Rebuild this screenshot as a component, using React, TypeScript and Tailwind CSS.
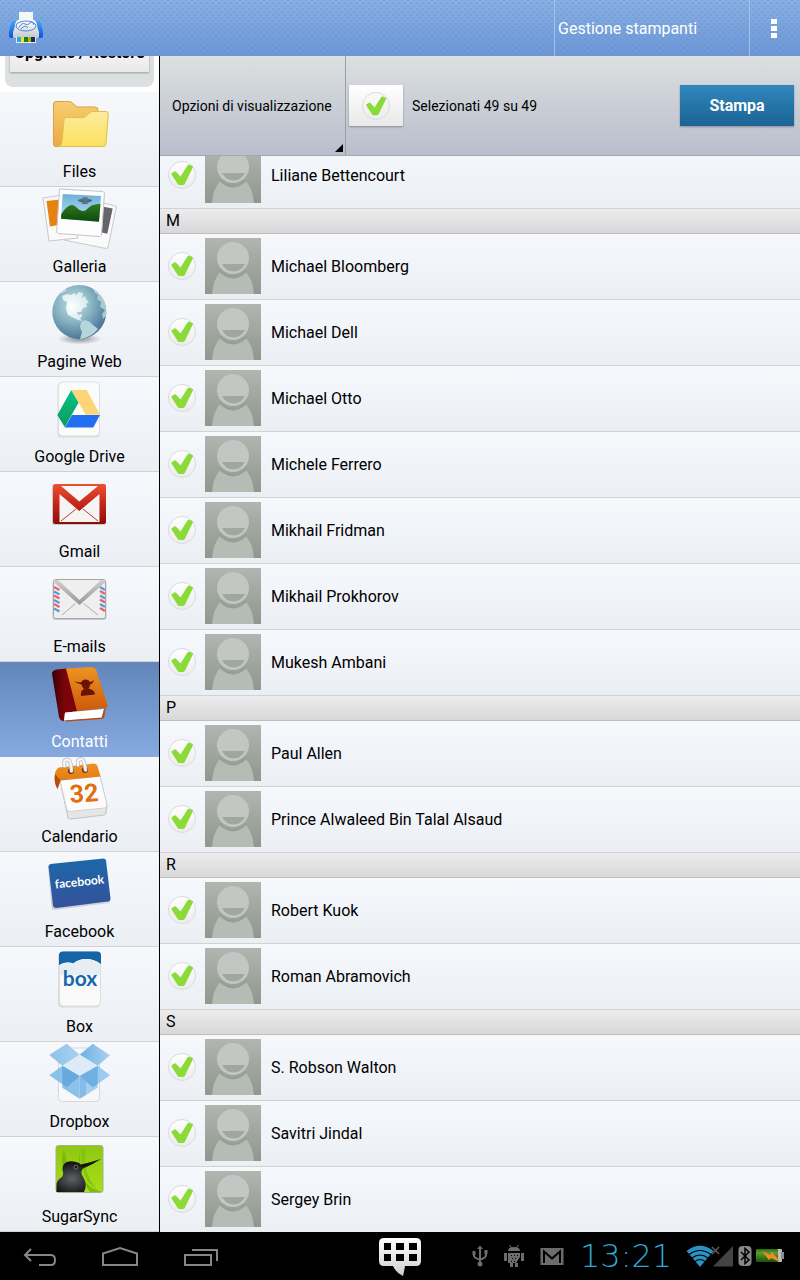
import { ReactNode, useState } from 'react';

interface Source {
    name: string;
    icon: ReactNode;
}

interface Group {
    letter?: string;
    people: string[];
}

/* ---------- sidebar icons, all on an 80x64 canvas ---------- */

const FilesIcon = () => (
    <>
        <defs>
            <linearGradient id="fBack" x1="0" y1="0" x2="0" y2="1">
                <stop offset="0" stopColor="#f6ce72" />
                <stop offset="1" stopColor="#eda944" />
            </linearGradient>
            <linearGradient id="fFront" x1="0" y1="0" x2="0" y2="1">
                <stop offset="0" stopColor="#fdeb9c" />
                <stop offset="1" stopColor="#fae25e" />
            </linearGradient>
        </defs>
        <path d="M13.500 12Q13.500 9.500 16 9.500H29Q31 9.500 32.500 11L37 15H55Q58 15 58 18V30L30 54.500H16Q13.500 54.500 13.500 52Z" fill="url(#fBack)" stroke="#dda13e" />
        <path d="M24 28Q24 25.500 26.500 25.500H42Q44 25.500 45.500 24.500L50 20.500Q51.500 19.500 53 19.500H66Q68.500 19.500 68.300 22L66 51.500Q65.800 54.500 63 54.500H18Q21.500 54 22 49Z" fill="url(#fFront)" stroke="#e2bf45" />
    </>
);

const GalleryIcon = () => (
    <>
        <defs>
            <linearGradient id="gSky" x1="0" y1="0" x2="0" y2="1">
                <stop offset="0" stopColor="#6cb0d8" />
                <stop offset="1" stopColor="#c4e4ee" />
            </linearGradient>
            <linearGradient id="gHill" x1="0" y1="0" x2="0" y2="1">
                <stop offset="0" stopColor="#2f7a22" />
                <stop offset="1" stopColor="#0d4a0c" />
            </linearGradient>
        </defs>
        <g strokeLinejoin="round">
            <path d="M64 16L76.500 19.500L68 60.500L66 61.500L24 53Z" fill="#fafafa" stroke="#c8cacc" />
            <path d="M62 19.500L72.700 21.500L67.300 46.700L60 45Z" fill="#66636a" />
            <path d="M3 11L22 8L38 51L9 54Z" fill="#fafafa" stroke="#c8cacc" />
            <path d="M6.500 14L20 12.500L18 38L10 39.500Z" fill="#e8820f" />
            <path d="M19.500 2L63 4.500L64.500 6L61.500 48L60 49.500L18 46.500L16.700 45Z" fill="#fdfdfd" stroke="#c4c6c8" />
        </g>
        <path d="M22.700 7L61 9L59 34.700L21 31.700Z" fill="url(#gSky)" />
        <path d="M21.300 27Q30 14 36 20T46 23Q52 16 60.500 17L59 34.700L21 31.700Z" fill="url(#gHill)" />
        <ellipse cx="45" cy="13.500" rx="7" ry="1.800" fill="#4c6375" />
        <ellipse cx="45" cy="12" rx="3" ry="2" fill="#5e7688" />
        <path d="M41 15.500H49L47 17H43Z" fill="#4c6375" />
    </>
);

const WebIcon = () => (
    <>
        <defs>
            <radialGradient id="wGlobe" cx=".4" cy=".35" r=".65">
                <stop offset="0" stopColor="#c3e1e1" />
                <stop offset=".5" stopColor="#8ab6c4" />
                <stop offset="1" stopColor="#4c779c" />
            </radialGradient>
            <radialGradient id="wLand" cx=".35" cy=".5" r=".8">
                <stop offset="0" stopColor="#ffffff" />
                <stop offset="1" stopColor="#c9e3e4" />
            </radialGradient>
            <radialGradient id="wShadow">
                <stop offset="0" stopColor="#8a8f95" />
                <stop offset="1" stopColor="#8a8f95" stopOpacity="0" />
            </radialGradient>
        </defs>
        <ellipse cx="39.500" cy="57" rx="22" ry="5.500" fill="url(#wShadow)" />
        <circle cx="39.300" cy="30" r="27" fill="url(#wGlobe)" />
        <path d="M22 14L27 12L31 13L34 11L36 13L39 10L43 11L42 16L45 14L47 18L49 20L46 22L47 25L43 26L41 30L37 30L38 33L42 32L42 35L40 36L42 39L38 38L32 35L28 33L26 27L27 20L23 18Z" fill="url(#wLand)" />
        <path d="M41 40L45 38L50 40L53 43L58 47A27 27 0 0 1 40 57L42 50L40 45Z" fill="#b5d6da" />
        <path d="M53 7A27 27 0 0 1 66 34L63 37L62 32L65 28L60 25L61 20L57 17L58 13L55 11Z" fill="#b9dadd" opacity=".8" />
        <path d="M20 11.500L25 7L27 8L23 11Z" fill="#d5eaea" opacity=".7" />
    </>
);

const DriveIcon = () => (
    <>
        <defs>
            <linearGradient id="dGreen" x1="0" y1="0" x2="0" y2="1">
                <stop offset="0" stopColor="#06c489" />
                <stop offset="1" stopColor="#0b9b57" />
            </linearGradient>
        </defs>
        <rect x="17.500" y="5.500" width="42" height="55" rx="4" fill="#c9ccd0" opacity=".6" />
        <rect x="18.500" y="5" width="41" height="54" rx="4" fill="#fbfbfb" stroke="#dcdee0" />
        <path d="M31.300 13L38.700 25.500L24.700 50L17.300 38Z" fill="url(#dGreen)" />
        <path d="M31.300 13H46.700L60 37.700H45.700Z" fill="#fdd576" />
        <path d="M32 38H60L53.300 50.500H24.700Z" fill="#2270f2" />
    </>
);

const GmailIcon = () => (
    <>
        <defs>
            <linearGradient id="mRed" x1="0" y1="0" x2="0" y2="1">
                <stop offset="0" stopColor="#ec5230" />
                <stop offset=".5" stopColor="#c42617" />
                <stop offset="1" stopColor="#8e0d07" />
            </linearGradient>
        </defs>
        <rect x="12" y="13" width="54" height="40" rx="3" fill="#9aa0a8" opacity=".5" />
        <rect x="13" y="12" width="53" height="40" rx="2" fill="url(#mRed)" />
        <path d="M21 14H58L39.300 29.500Z" fill="#f7f7f7" />
        <path d="M19.500 22L39.300 39L59.500 22V50H19.500Z" fill="#f4f4f4" />
        <path d="M21 49L36 37M58 49L43 37" stroke="#c4392c" fill="none" />
    </>
);

const EmailIcon = () => (
    <>
        <defs>
            <linearGradient id="eFlap" x1="0" y1="0" x2="0" y2="1">
                <stop offset="0" stopColor="#cfcfcf" />
                <stop offset="1" stopColor="#969696" />
            </linearGradient>
        </defs>
        <rect x="12.500" y="14" width="54" height="39" rx="3" fill="#9aa0a8" opacity=".5" />
        <rect x="13.500" y="12.500" width="52" height="39" rx="2" fill="#efefef" stroke="#a5a7a9" />
        {[20, 28.500, 37].map((y) => (
            <g key={y} strokeWidth="2.500">
                <path d={`M14 ${y}L19.500 ${y + 3}M60 ${y + 4}L65 ${y + 7}`} stroke="#e8646c" />
                <path d={`M14 ${y + 4.500}L19.500 ${y + 7.500}M60 ${y}L65 ${y + 3}`} stroke="#5d9bd8" />
            </g>
        ))}
        <path d="M14 13H18L39.500 33L61 13H65V15.500L39.500 38L14 15.500Z" fill="url(#eFlap)" />
        <path d="M22 48L35.500 36.500M58 48L43.500 36.500" stroke="#adadad" fill="none" />
    </>
);

const ContactsIcon = () => (
    <>
        <defs>
            <linearGradient id="cCover" x1="0" y1="0" x2="0" y2="1">
                <stop offset="0" stopColor="#ee9422" />
                <stop offset="1" stopColor="#cd5909" />
            </linearGradient>
            <linearGradient id="cSpine" x1="0" y1="0" x2="1" y2="0">
                <stop offset="0" stopColor="#3a0204" />
                <stop offset=".5" stopColor="#7c0409" />
            </linearGradient>
        </defs>
        <path d="M12 12Q12 8 17 7.500L27 6.500L38 49L25 51L24 59Q20 59 19 55Z" fill="url(#cSpine)" />
        <path d="M26 6.500L52 5Q55 5 56 7.500L67.500 43Q68 45.500 65 46L37 49.500Z" fill="url(#cCover)" />
        <path d="M25 50.500L64 47L61.500 56L24 58.500Z" fill="#ffffff" />
        <path d="M24 58.500L62 55.500L64 47L65.500 46L64.500 54Q64 57 61 57L27 59.500Z" fill="#b84a08" />
        <path d="M34 19Q38 21 41.500 20Q42 17.500 46 17.500Q49 17.500 50 20Q52 20 54 17.500Q53 22 50 22.500Q50 25 48.500 26.500Q55 28 55 32.500L41 34Q40 29 44 27Q42 25 41.500 22.500Q37 22 34 19Z" fill="#6c1206" />
    </>
);

const CalendarIcon = () => (
    <>
        <defs>
            <linearGradient id="kTop" x1="0" y1="0" x2="0" y2="1">
                <stop offset="0" stopColor="#ee9224" />
                <stop offset="1" stopColor="#dd700a" />
            </linearGradient>
        </defs>
        <path d="M20 23L28 61Q29 62 31 62L64 58Q66 57.500 66 55L67 49L60 19Z" fill="#e6e6e6" stroke="#bfc1c3" />
        <path d="M20 23L60 19L67 48Q67 50.500 64.500 51L30 54.500Q27.500 54.500 26.500 51.500Z" fill="#fcfcfc" stroke="#d0d1d3" />
        <path d="M19 10.500L54 6.500Q56.500 6.500 57.500 9L60.500 19.500L20.500 23.500L17.500 32Q14 26 14.500 20Q15 12 19 10.500Z" fill="url(#kTop)" />
        <path d="M15 17L20.500 23.500L17.500 32Q14 26 15 17Z" fill="#b84d0a" />
        <circle cx="31" cy="14" r="3" fill="#7a2b08" />
        <circle cx="45" cy="13" r="3" fill="#7a2b08" />
        <path d="M24.500 9Q23 2.500 27.500 2.500Q31 2.500 31.500 14M38 8Q37 2 41 2Q44.500 2 45.500 13" fill="none" stroke="#b9bcbf" strokeWidth="4" strokeLinecap="round" />
        <path d="M24.500 9Q23 2.500 27.500 2.500Q31 2.500 31.500 14M38 8Q37 2 41 2Q44.500 2 45.500 13" fill="none" stroke="#f4f5f6" strokeWidth="2.500" strokeLinecap="round" />
        <text x="44" y="45" transform="rotate(-4 44 36)" textAnchor="middle" fontSize="25" fontWeight="700" fill="#df700f" className="font-['Roboto',sans-serif]">32</text>
    </>
);

const FacebookIcon = () => (
    <>
        <defs>
            <linearGradient id="bBlue" x1="0" y1="0" x2="0" y2="1">
                <stop offset="0" stopColor="#1c68a9" />
                <stop offset="1" stopColor="#35519a" />
            </linearGradient>
        </defs>
        <path d="M8 15L10 13L14 55L70 50L70 51L14 58Q12 58 11.500 56Z" fill="#9aa0a8" opacity=".4" />
        <path d="M8.500 14.500Q8.500 12.500 10.500 12L63.500 6.500Q65.500 6.500 66 8.500L70.500 46.500Q70.500 49 68.500 49.500L16 56Q13.500 56 13 53.500Z" fill="url(#bBlue)" />
        <text x="39.500" y="34" transform="rotate(-6 39.5 30)" textAnchor="middle" fontSize="12" fontWeight="700" fill="#ffffff" className="font-['Lato',sans-serif]">facebook</text>
    </>
);

const BoxIcon = () => (
    <>
        <rect x="18" y="5.500" width="42" height="55" rx="4" fill="#c9ccd0" opacity=".6" />
        <rect x="19.500" y="4.500" width="41" height="54.500" rx="4" fill="#fafafa" stroke="#dcdee0" />
        <path d="M19 8Q19 4.500 23 4.500H57Q61 4.500 61 8V17Q54 12 46 12Q38 12 33.500 16.500Q26 14 19 18Z" fill="#1465a8" />
        <path d="M20 18Q26 14 33.500 16.500Q38 12 46 12Q54 12 60 17V28H20Z" fill="#e6eef2" />
        <text x="40" y="39" textAnchor="middle" fontSize="21" fontWeight="700" fill="#1668ab" className="font-['Lato',sans-serif]">box</text>
    </>
);

const DropboxIcon = () => (
    <>
        <defs>
            <linearGradient id="xA" x1="0" y1="0" x2="1" y2="0">
                <stop offset="0" stopColor="#8cc1ea" />
                <stop offset="1" stopColor="#a9d2f0" />
            </linearGradient>
            <linearGradient id="xB" x1="0" y1="0" x2="1" y2="0">
                <stop offset="0" stopColor="#6eb0e3" />
                <stop offset="1" stopColor="#a9d2f0" />
            </linearGradient>
        </defs>
        <rect x="18.500" y="6" width="41" height="53.500" rx="4" fill="#f8f8f9" stroke="#d6d8da" />
        <path d="M26.700 1.700L39.700 12.700L22.300 23.700L9.300 13Z" fill="url(#xA)" />
        <path d="M52.700 1.700L70 13.300L57.700 23.700L39.700 12.700Z" fill="url(#xB)" />
        <path d="M39.700 12.700L57.700 23.700L39.700 34L22.300 23.700Z" fill="#deebf7" />
        <path d="M22.300 25L39.700 34.700V56.700L22.300 45.700Z" fill="#8cc1ea" />
        <path d="M57.700 25L39.700 34.700V56.700L57.700 45.700Z" fill="#a2cff0" />
        <path d="M39.700 34.700V56.700L46 53V38Z" fill="#68abdf" opacity=".5" />
        <path d="M22.300 23.700L39.700 34L26.700 45.300L9.300 33.300Z" fill="#7ab8e7" opacity=".85" />
        <path d="M22.300 23.700L39.700 34L26.700 45.300L22.300 42Z" fill="#5da3da" opacity=".7" />
        <path d="M57.700 23.700L70 33.300L52.700 45.300L39.700 34Z" fill="#8cc3ed" opacity=".85" />
        <path d="M57.700 23.700V42L52.700 45.300L39.700 34Z" fill="#5fa6dd" opacity=".7" />
    </>
);

const SugarSyncIcon = () => (
    <>
        <defs>
            <radialGradient id="sBird" cx=".35" cy=".6" r=".5">
                <stop offset="0" stopColor="#606264" />
                <stop offset="1" stopColor="#121212" />
            </radialGradient>
            <linearGradient id="sGreen" x1="0" y1="0" x2="0" y2="1">
                <stop offset="0" stopColor="#8fc713" />
                <stop offset="1" stopColor="#a9df14" />
            </linearGradient>
        </defs>
        <rect x="16" y="8.500" width="47" height="47" rx="2.500" fill="url(#sGreen)" stroke="#a4b08a" />
        <path d="M24 12Q20 24 24 35L27 25ZM40 12Q37 30 44 43Q50 52 62 55H50L40 40Z" fill="#79ba10" />
        <path d="M46 12Q43 30 50 43L58 54L48 45Q40 30 41 12Z" fill="#84c410" />
        <path d="M16.500 55V47Q17 43 22 40Q24 37 22.500 33Q22 27 27 25Q31 23.500 36 25Q39 25.500 41 27.500Q52 25 61 22Q52 28 43 31.500Q40 35 42.500 39Q48 47 44 55Z" fill="url(#sBird)" />
        <circle cx="36" cy="30" r="2" fill="#1c1c1c" stroke="#8b8d8f" strokeWidth=".7" />
    </>
);

/* ---------- data ---------- */

const sources: Source[] = [
    { name: 'Files', icon: <FilesIcon /> },
    { name: 'Galleria', icon: <GalleryIcon /> },
    { name: 'Pagine Web', icon: <WebIcon /> },
    { name: 'Google Drive', icon: <DriveIcon /> },
    { name: 'Gmail', icon: <GmailIcon /> },
    { name: 'E-mails', icon: <EmailIcon /> },
    { name: 'Contatti', icon: <ContactsIcon /> },
    { name: 'Calendario', icon: <CalendarIcon /> },
    { name: 'Facebook', icon: <FacebookIcon /> },
    { name: 'Box', icon: <BoxIcon /> },
    { name: 'Dropbox', icon: <DropboxIcon /> },
    { name: 'SugarSync', icon: <SugarSyncIcon /> },
];

const groups: Group[] = [
    { people: ['Liliane Bettencourt'] },
    {
        letter: 'M',
        people: ['Michael Bloomberg', 'Michael Dell', 'Michael Otto', 'Michele Ferrero', 'Mikhail Fridman', 'Mikhail Prokhorov', 'Mukesh Ambani'],
    },
    { letter: 'P', people: ['Paul Allen', 'Prince Alwaleed Bin Talal Alsaud'] },
    { letter: 'R', people: ['Robert Kuok', 'Roman Abramovich'] },
    { letter: 'S', people: ['S. Robson Walton', 'Savitri Jindal', 'Sergey Brin'] },
];

/* ---------- small parts ---------- */

const Tick = ({ className = '' }: { className?: string }) => (
    <svg viewBox="0 0 28 28" className={`size-7 ${className}`} aria-hidden="true">
        <path d="M3.500 13.500Q2.800 12.500 4 12L6.500 10.500Q7.500 10 8 10.700L12.500 15.500L19.500 4.500Q20.300 3.500 21.500 3.800L24.500 5Q25.300 5.500 24.800 6.500L17 22.500Q16.200 24 15 24H11.500Q10.300 24 9.700 23Z" fill="#8ada38" />
    </svg>
);

const Avatar = () => (
    <svg viewBox="0 0 56 56" className="size-14 bg-linear-to-b from-[#b1b6b0] to-[#8f978e]" aria-hidden="true">
        <path d="M15 34Q28 47 41 34Q48 42 49 56H7Q8 42 15 34Z" fill="#b5bbb5" />
        <path d="M14 31Q28 46 42 31L40.500 35Q28 45 15.500 35Z" fill="#969e95" />
        <circle cx="28" cy="20" r="16" fill="#c3c7c3" />
        <path d="M17 26H40Q36 33.500 28.500 33.500T17 26Z" fill="#a0a79f" />
    </svg>
);

const ContactRow = ({ name, checked, onToggle }: { name: string; checked: boolean; onToggle: () => void }) => (
    <li className="h-[66px] border-b border-[#cfd2d6] bg-linear-to-b from-[#f6f8fc] to-[#ebeff4]">
        <label className="flex items-center pt-1 pl-2">
            <span className="relative size-7 shrink-0">
                <input
                    type="checkbox"
                    checked={checked}
                    onChange={onToggle}
                    className="peer block size-7 appearance-none rounded-full border border-[#d9dbde] bg-linear-to-b from-white to-[#ececee]"
                />
                <Tick className="pointer-events-none absolute inset-0 hidden peer-checked:block" />
            </span>
            <span className="ml-[9px] shrink-0"><Avatar /></span>
            <span className="ml-[10px] pt-[2px] text-base">{name}</span>
        </label>
    </li>
);

const SystemBar = () => (
    <footer className="flex h-12 shrink-0 items-center justify-between bg-black pr-4 pl-[22px]">
        <div className="flex gap-11">
            <button type="button" aria-label="Indietro">
                <svg width="36" height="24" viewBox="0 0 36 24" fill="none" stroke="#868686" strokeWidth="2">
                    <path d="M9 5L3 11L9 17M3 11H29Q33 11 33 16T29 21H17" />
                </svg>
            </button>
            <button type="button" aria-label="Home">
                <svg width="36" height="24" viewBox="0 0 36 24" fill="none" stroke="#868686" strokeWidth="2">
                    <path d="M1 21V9.500L18 4L35 9.500V21Z" />
                </svg>
            </button>
            <button type="button" aria-label="Recenti">
                <svg width="36" height="24" viewBox="0 0 36 24" fill="none" stroke="#868686" strokeWidth="2">
                    <path d="M3 11H29V21H3ZM10 6H35V17" />
                </svg>
            </button>
        </div>

        <button type="button" aria-label="Tastiera" className="ml-[109px]">
            <svg width="44" height="40" viewBox="0 0 44 40">
                <defs>
                    <linearGradient id="chat" x1="0" y1="0" x2="0" y2="1">
                        <stop offset="0" stopColor="#ffffff" />
                        <stop offset="1" stopColor="#cccccc" />
                    </linearGradient>
                </defs>
                <path d="M6 2H38Q43 2 43 7V25Q43 30 38 30H27Q26 36 25 40Q18 37 15 30H6Q1 30 1 25V7Q1 2 6 2Z" fill="url(#chat)" />
                <path d="M6 7h7v7H6ZM18 7h8v7H18ZM31 7h8v7H31ZM6 18h7v7H6ZM18 18h8v7H18ZM31 18h8v7H31Z" fill="#000000" />
            </svg>
        </button>

        <div className="flex items-center">
            <svg width="16" height="24" viewBox="0 0 16 24" fill="none" stroke="#6c6c6c" strokeWidth="2">
                <path d="M8 4V20M2 9V12Q2 14 8 15.500Q14 14 14 11V8" />
                <path d="M5 5L8 1.500L11 5Z" fill="#6c6c6c" stroke="none" />
                <path d="M0.500 7h3v4h-3ZM12.500 6h3v4h-3Z" fill="#6c6c6c" stroke="none" />
                <circle cx="8" cy="20" r="2.500" fill="#6c6c6c" stroke="none" />
            </svg>
            <svg width="20" height="24" viewBox="0 0 20 24" fill="#6c6c6c" className="ml-4">
                <path d="M4 7Q4 3 10 3T16 7ZM4 9H16V19H4ZM0 9h3v8H0ZM17 9h3v8h-3ZM6 19h3v4H6ZM11 19h3v4h-3Z" />
                <path d="M5.500 1L7.500 4M14.500 1L12.500 4" stroke="#6c6c6c" />
                <path d="M7 11h1v1H7ZM10 11h1v1h-1ZM13 11h1v1h-1ZM8 14h1v1H8ZM11 14h1v1h-1ZM7 17h1v1H7ZM10 17h1v1h-1Z" fill="#000000" />
                <path d="M12 19L16 13V19Z" fill="#000000" />
            </svg>
            <svg width="24" height="24" viewBox="0 0 24 24" className="ml-4">
                <rect x="0.500" y="4" width="23" height="17" fill="#6c6c6c" />
                <path d="M4 19V7.500L12 14.500L20 7.500V19" fill="none" stroke="#000000" strokeWidth="2" />
            </svg>
            <time className="ml-4 w-[106px] font-['DejaVu_Sans',sans-serif] text-[32px] leading-none font-extralight text-[#2fa8d8]">13:21</time>
            <svg width="48" height="24" viewBox="0 0 48 24">
                <path d="M0.500 7Q14 -3.500 27.500 7L14 23Z" fill="#2a93c1" />
                <path d="M3 10.500Q14 2.500 25 10.500M6 14Q14 8 22 14M9 17.500Q14 13.500 19 17.500" fill="none" stroke="#000000" strokeWidth="1.200" />
                <path d="M27 22.500H47V2Z" fill="#434343" />
                <path d="M26 3L33 10M33 3L26 10" stroke="#5b5b5b" strokeWidth="1.500" />
            </svg>
            <svg width="14" height="24" viewBox="0 0 14 24" className="ml-1">
                <rect x="0.500" y="2" width="13" height="20" rx="4" fill="#888888" />
                <path d="M3 8L11 16L7 19.500V4.500L11 8L3 16" fill="none" stroke="#000000" strokeWidth="1.500" />
            </svg>
            <svg width="28" height="24" viewBox="0 0 28 24" className="ml-1">
                <defs>
                    <linearGradient id="batt" x1="0" y1="0" x2="0" y2="1">
                        <stop offset="0" stopColor="#2c6b10" />
                        <stop offset=".3" stopColor="#5aa02a" />
                        <stop offset="1" stopColor="#1f4f08" />
                    </linearGradient>
                </defs>
                <rect x="18" y="5" width="8" height="13" rx="1" fill="#bdbdbd" />
                <rect x="25" y="8" width="3" height="7" fill="#8c8c8c" />
                <rect x="0" y="5" width="22" height="13" rx="1" fill="url(#batt)" />
                <path d="M6 7L14 11L16 8L22 15L24 18L15 14L13 16Z" fill="#f58a2b" />
            </svg>
        </div>
    </footer>
);

/* ---------- page ---------- */

const App = () => {
    const [active, setActive] = useState('Contatti');
    const [unchecked, setUnchecked] = useState<string[]>([]);
    const total = 49;

    const toggle = (name: string) => {
        setUnchecked((prev) => (prev.includes(name) ? prev.filter((n) => n !== name) : [...prev, name]));
    };

    return (
        <div className="flex h-screen flex-col overflow-hidden bg-white font-['Roboto',sans-serif] text-black">
            <header className="flex h-14 shrink-0 items-stretch bg-[radial-gradient(circle,#5c84c844_1px,transparent_1px),radial-gradient(circle,#5c84c844_1px,transparent_1px),linear-gradient(to_bottom,#88b0e3,#6c96d6)] bg-[size:6px_6px,6px_6px,100%_100%] bg-[position:0_0,3px_3px,0_0] text-white">
                <div className="flex flex-1 items-center pl-2">
                    <svg width="36" height="32" viewBox="0 0 36 32" aria-hidden="true">
                        <defs>
                            <linearGradient id="pBlue" x1="0" y1="0" x2="0" y2="1">
                                <stop offset="0" stopColor="#3aa5fb" />
                                <stop offset="1" stopColor="#0a55d8" />
                            </linearGradient>
                            <linearGradient id="pBody" x1="0" y1="0" x2="0" y2="1">
                                <stop offset="0" stopColor="#ffffff" />
                                <stop offset="1" stopColor="#c3c7cc" />
                            </linearGradient>
                        </defs>
                        <path d="M6 9H30Q33 9 34 16L35 19V24Q35 26 33 26H3Q1 26 1 24V19L2 16Q3 9 6 9Z" fill="url(#pBlue)" />
                        <path d="M11 0H25V10H11Z" fill="#f6f7f8" />
                        <path d="M10 8H26Q29 9 29.500 16L31 20V25Q31 26 30 26H6Q5 26 5 25V20L6.500 16Q7 9 10 8Z" fill="url(#pBody)" />
                        <ellipse cx="18" cy="14" rx="10" ry="5" fill="none" stroke="#4f86d6" />
                        <path d="M11 15.500Q14 10 17 12T22 11T26 13M13 17Q17 12 20 16" fill="none" stroke="#4f86d6" />
                        <rect x="8" y="25" width="20" height="6" fill="#e8e8e8" />
                        <rect x="9" y="25" width="4" height="5" fill="#23a9e8" />
                        <rect x="13" y="25" width="3" height="5" fill="#f0e215" />
                        <rect x="16" y="25" width="4" height="5" fill="#217a2a" />
                        <rect x="20" y="25" width="3" height="5" fill="#a8b818" />
                        <rect x="23" y="25" width="4" height="5" fill="#1f2a60" />
                    </svg>
                </div>
                <button type="button" className="w-[195px] border-l border-[#a5c1ea] pt-[2px] pl-[3px] text-left text-base">Gestione stampanti</button>
                <button type="button" aria-label="Menu" className="flex w-[51px] flex-col items-center justify-center gap-[2px] border-l border-[#a5c1ea] pr-[2px]">
                    <span className="h-[5px] w-[6px] bg-white" />
                    <span className="h-[5px] w-[6px] bg-white" />
                    <span className="h-[5px] w-[6px] bg-white" />
                </button>
            </header>

            <div className="flex min-h-0 flex-1">
                <aside className="w-40 shrink-0 overflow-hidden border-r border-black">
                    <div className="-mt-[27px] bg-white px-[5px] pb-[5px]">
                        <div className="rounded-lg bg-[#dce0e0] px-[5px] pt-[5px] pb-[15px]">
                            <button type="button" className="block h-[38px] w-full bg-linear-to-b from-white to-[#e9e9e9] text-base font-bold whitespace-nowrap shadow-[0_1px_2px_#0000004d]">
                                Upgrade / Restore
                            </button>
                        </div>
                    </div>
                    <nav>
                        {sources.map(({ name, icon }) => (
                            <button
                                key={name}
                                type="button"
                                onClick={() => setActive(name)}
                                className={`flex w-full flex-col items-center border-b bg-linear-to-b ${
                                    name === active
                                        ? 'border-[#86aae0] from-[#6386ba] to-[#86aae0] text-white'
                                        : 'border-[#cfd2d6] from-[#f6f8fc] to-[#ebeff4]'
                                }`}
                            >
                                <svg viewBox="0 0 80 64" className="h-16 w-20" aria-hidden="true">{icon}</svg>
                                <span className="pt-[2px] text-base leading-7">{name}</span>
                            </button>
                        ))}
                    </nav>
                </aside>

                <main className="flex min-w-0 flex-1 flex-col">
                    <div className="flex h-[100px] shrink-0 items-center border-b border-[#a3a8b3] bg-linear-to-b from-[#dce0e1] to-[#b8becc] pr-[6px] text-sm">
                        <div className="relative h-full w-[186px] border-r border-[#9a9ea8]">
                            <select aria-label="Opzioni di visualizzazione" className="h-full w-full appearance-none bg-transparent pl-3">
                                <option>Opzioni di visualizzazione</option>
                            </select>
                            <svg viewBox="0 0 8 8" className="pointer-events-none absolute right-[2px] bottom-[3px] size-2" aria-hidden="true">
                                <path d="M8 0V8H0Z" />
                            </svg>
                        </div>
                        <button
                            type="button"
                            aria-label="Seleziona tutti"
                            onClick={() => setUnchecked([])}
                            className="ml-[3px] flex h-[41px] w-[54px] items-center justify-center bg-linear-to-b from-white to-[#e8e8e8] shadow-[0_1px_2px_#0000004d]"
                        >
                            <Tick className="rounded-full border border-[#dcdcdc]" />
                        </button>
                        <span className="ml-[9px] flex-1">Selezionati {total - unchecked.length} su {total}</span>
                        <button type="button" className="h-[41px] w-[114px] bg-linear-to-b from-[#3187bd] to-[#1b6394] text-base font-bold text-white shadow-[0_1px_2px_#0000004d]">
                            Stampa
                        </button>
                    </div>

                    <div className="min-h-0 flex-1 overflow-hidden">
                        <div className="-mt-[13px]">
                            {groups.map(({ letter, people }) => (
                                <section key={people[0]}>
                                    {letter && (
                                        <h2 className="h-[25px] border-b border-[#bcbec0] bg-linear-to-b from-[#ececec] to-[#d8d8d8] pl-[6px] text-base leading-6">{letter}</h2>
                                    )}
                                    <ul>
                                        {people.map((name) => (
                                            <ContactRow key={name} name={name} checked={!unchecked.includes(name)} onToggle={() => toggle(name)} />
                                        ))}
                                    </ul>
                                </section>
                            ))}
                        </div>
                    </div>
                </main>
            </div>

            <SystemBar />
        </div>
    );
};

export default App;
